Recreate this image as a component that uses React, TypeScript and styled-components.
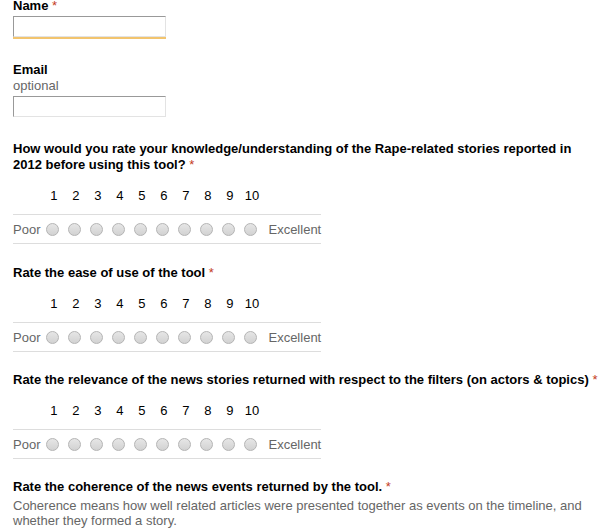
import React from "react";
import styled, { createGlobalStyle } from "styled-components";

const Global = createGlobalStyle`
  html, body { margin: 0; padding: 0; background: #fff; }
  body { font-family: "Liberation Sans", Arial, sans-serif; font-size: 13px; color: #000; }
`;

const Form = styled.div`
  padding: 0 5px 0 13px;
  margin-top: -2px;
  display: flex;
  flex-direction: column;
`;

const Field = styled.div<{ $gap: number }>`
  display: flex;
  flex-direction: column;
  margin-bottom: ${(p) => p.$gap}px;
`;

const Label = styled.div`
  font-weight: bold;
  line-height: 16px;
`;

const Req = styled.span`
  color: #c43b1d;
  font-weight: normal;
`;

const Help = styled.div<{ $top?: number }>`
  color: #666;
  line-height: 15px;
  margin-top: ${(p) => p.$top ?? 0}px;
`;

const TextBox = styled.div<{ $focus?: boolean; $top?: number }>`
  width: 151px;
  height: 19px;
  margin-top: ${(p) => p.$top ?? 2}px;
  border-style: solid;
  border-width: 1px;
  border-color: #999 #e3e3e3 #e3e3e3 #999;
  box-shadow: ${(p) => (p.$focus ? "0 2px 0 0 #f2c46e" : "none")};
  background: #fff;
`;

const Scale = styled.div`
  display: grid;
  grid-template-columns: auto repeat(10, 22px) auto;
  width: max-content;
`;

const Num = styled.div`
  padding: 15px 0 10px 3px;
  line-height: 16px;
  text-align: center;
  border-bottom: 1px solid #ddd;
`;

const Blank = styled.div`
  border-bottom: 1px solid #ddd;
`;

const Cell = styled.div<{ $left?: number; $right?: number }>`
  height: 28px;
  display: flex;
  align-items: center;
  justify-content: center;
  color: #666;
  padding-left: ${(p) => p.$left ?? 0}px;
  padding-right: ${(p) => p.$right ?? 0}px;
  border-bottom: 1px solid #ddd;
`;

const Radio = styled.span`
  width: 11px;
  height: 11px;
  border-radius: 50%;
  border: 1px solid #b4b4b4;
  background: linear-gradient(#e6e6e6, #d2d2d2);
  margin-top: 1px;
`;

const nums = [1, 2, 3, 4, 5, 6, 7, 8, 9, 10];

function RatingScale() {
  return (
    <Scale>
      <Blank />
      {nums.map((n) => (
        <Num key={n}>{n}</Num>
      ))}
      <Blank />
      <Cell $right={1}>Poor</Cell>
      {nums.map((n) => (
        <Cell key={n}>
          <Radio />
        </Cell>
      ))}
      <Cell $left={7}>Excellent</Cell>
    </Scale>
  );
}

function Question({ title, gap = 20 }: { title: string; gap?: number }) {
  return (
    <Field $gap={gap}>
      <Label>
        {title} <Req>*</Req>
      </Label>
      <RatingScale />
    </Field>
  );
}

export default function App() {
  return (
    <>
      <Global />
      <Form>
        <Field $gap={25}>
          <Label>
            Name <Req>*</Req>
          </Label>
          <TextBox $focus />
        </Field>
        <Field $gap={24}>
          <Label>Email</Label>
          <Help>optional</Help>
          <TextBox $top={3} />
        </Field>
        <Question gap={21} title="How would you rate your knowledge/understanding of the Rape-related stories reported in 2012 before using this tool?" />
        <Question title="Rate the ease of use of the tool" />
        <Question title="Rate the relevance of the news stories returned with respect to the filters (on actors & topics)" />
        <Field $gap={20}>
          <Label>
            Rate the coherence of the news events returned by the tool. <Req>*</Req>
          </Label>
          <Help $top={3}>
            Coherence means how well related articles were presented together as events on the timeline, and whether they formed a story.
          </Help>
        </Field>
      </Form>
    </>
  );
}
